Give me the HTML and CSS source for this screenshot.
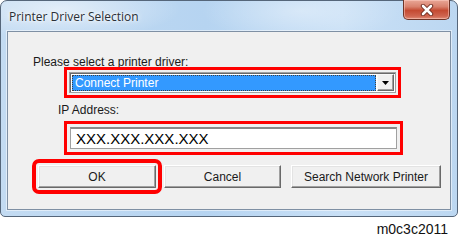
FILE: index.html
```html
<!DOCTYPE html>
<html>
	<head>
		<meta charset="utf-8" />
		<title>Printer Driver Selection</title>
		<link rel="stylesheet" href="styles.css">
	</head>
	<body>

		<div class="window">
			<div class="titlebar">
				<span class="title">Printer Driver Selection</span>
				<span class="close">
					<svg width="16" height="12" viewBox="0 0 16 12">
						<path d="M4 2 L12 10 M12 2 L4 10" stroke="#6b2a1e" stroke-width="4.4" stroke-linecap="round" fill="none"/>
						<path d="M4 2 L12 10 M12 2 L4 10" stroke="#ffffff" stroke-width="2.6" stroke-linecap="round" fill="none"/>
					</svg>
				</span>
			</div>

			<div class="client">
				<div class="label driver-label">Please select a printer driver:</div>

				<div class="combo marked">
					<span class="combo-value">Connect Printer</span>
					<span class="combo-btn">
						<svg width="7" height="4" viewBox="0 0 7 4"><path d="M0 0 L7 0 L3.5 4 Z" fill="#000"/></svg>
					</span>
				</div>

				<div class="label ip-label">IP Address:</div>

				<div class="field marked">XXX.XXX.XXX.XXX</div>

				<div class="buttons">
					<button class="btn btn-ok marked">OK</button>
					<button class="btn btn-cancel">Cancel</button>
					<button class="btn btn-search">Search Network Printer</button>
				</div>
			</div>
		</div>

		<div class="caption">m0c3c2011</div>

	</body>
</html>
```

FILE: styles.css
```css
body {
	margin: 0;
	padding: 0;
	background-color: #ffffff;
	font-family: "Liberation Sans", Arial, sans-serif;
	font-size: 12px;
	color: #1a1a1a;
}

.window {
	width: 458px;
	height: 217px;
	box-sizing: border-box;
	border: 1px solid #55667a;
	border-radius: 7px 7px 5px 5px;
	padding: 0 6px 6px 6px;
	display: flex;
	flex-direction: column;
	background:
		radial-gradient(ellipse 120px 30px at 60px 8px, rgba(255, 255, 255, 0.55), rgba(255, 255, 255, 0)),
		radial-gradient(ellipse 100px 30px at 300px 10px, rgba(255, 255, 255, 0.35), rgba(255, 255, 255, 0)),
		linear-gradient(to right, #c3dbf2, #b6d4f1 45%, #c9e0f6 75%, #bcd7f1);
}

/* title */
.titlebar {
	height: 30px;
	display: flex;
	align-items: center;
	flex-shrink: 0;
}

.title {
	padding-left: 2px;
	padding-top: 1px;
	font-family: "Open Sans", "Liberation Sans", sans-serif;
	font-size: 12px;
	color: #2a2f36;
	text-shadow: 0 0 6px #ffffff, 0 0 3px #ffffff;
}

.close {
	margin-left: auto;
	margin-right: 1px;
	margin-top: -1px;
	align-self: flex-start;
	width: 47px;
	height: 20px;
	box-sizing: border-box;
	border: 1px solid #6e3428;
	border-top: none;
	border-radius: 0 0 5px 5px;
	background: linear-gradient(to bottom, #e9a797 0%, #d9826e 35%, #c44a32 55%, #cf6550 85%, #e08d78 100%);
	box-shadow: inset 0 0 0 1px rgba(255, 210, 200, 0.5);
	display: flex;
	align-items: center;
	justify-content: center;
}

/* client area */
.client {
	height: 179px;
	box-sizing: border-box;
	border: 1px solid #7f90a4;
	box-shadow: 0 0 0 1px rgba(255, 255, 255, 0.5);
	background-color: #f0f0f0;
}

.label {
	line-height: 15px;
}

.driver-label {
	margin: 23px 0 0 25px;
}

.ip-label {
	margin: 10px 0 0 50px;
}

.marked {
	outline: 3px solid #ff0000;
	outline-offset: 2px;
}

.combo {
	margin: 2px 0 0 61px;
	width: 327px;
	height: 21px;
	box-sizing: border-box;
	border: 1px solid #a0a0a0;
	box-shadow: inset 1px 1px 0 #696969;
	background-color: #ffffff;
	display: flex;
	padding: 2px 1px 1px 2px;
}

.combo-value {
	flex: 1;
	background-color: #3399ff;
	color: #ffffff;
	border: 1px dotted #404040;
	padding-left: 2px;
	line-height: 14px;
	margin-right: 1px;
}

.combo-btn {
	width: 17px;
	box-sizing: border-box;
	margin: -1px 0 0 0;
	background-color: #f0f0f0;
	border-top: 1px solid #f8f8f8;
	border-left: 1px solid #f8f8f8;
	border-right: 1px solid #696969;
	border-bottom: 1px solid #696969;
	box-shadow: inset -1px -1px 0 #a0a0a0;
	display: flex;
	align-items: center;
	justify-content: center;
}

.field {
	margin: 9px 0 0 62px;
	width: 327px;
	height: 22px;
	box-sizing: border-box;
	border: 1px solid #a0a0a0;
	border-top: 2px solid #8a8a8a;
	background-color: #ffffff;
	font-size: 15px;
	line-height: 19px;
	padding-left: 5px;
	color: #000000;
}

.field.marked {
	outline-offset: 3px;
}

.buttons {
	display: flex;
	margin: 16px 0 0 30px;
}

.btn {
	height: 23px;
	box-sizing: border-box;
	font-family: "Liberation Sans", Arial, sans-serif;
	font-size: 12px;
	color: #1a1a1a;
	background-color: #f0f0f0;
	border-top: 1px solid #ffffff;
	border-left: 1px solid #ffffff;
	border-right: 1px solid #696969;
	border-bottom: 1px solid #696969;
	box-shadow: inset -1px -1px 0 #a0a0a0, inset 1px 1px 0 #e3e3e3;
	padding: 0;
	border-radius: 0;
}

.btn-ok {
	width: 118px;
	outline-width: 4px;
	outline-offset: 2px;
	border-radius: 1px;
}

.btn-cancel {
	width: 117px;
	margin-left: 8px;
}

.btn-search {
	width: 150px;
	margin-left: 10px;
}

.caption {
	margin-top: 4px;
	padding-right: 12px;
	text-align: right;
	font-family: "Liberation Sans", Arial, sans-serif;
	font-size: 14px;
	line-height: 16px;
	color: #111111;
}
```
